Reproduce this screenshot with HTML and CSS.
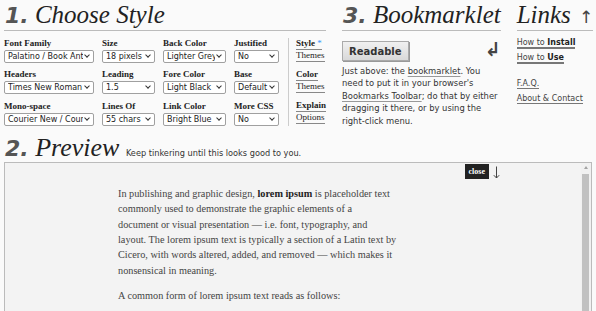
FILE: index.html
```html
<!DOCTYPE html>
<html lang="en">
<head>
  <meta charset="UTF-8">
  <meta name="viewport" content="width=device-width, initial-scale=1.0">
  <title>Readable</title>
  <link rel="stylesheet" href="styles.css">
</head>
<body>
  <div class="top">
    <section class="choose">
      <h1 class="heading"><span class="num">1.</span> Choose Style</h1>
      <div class="choose-body">
        <div class="fields">
          <div class="field">
            <label>Font Family</label>
            <span class="pick"><select><option>Palatino / Book Antiqua</option></select></span>
          </div>
          <div class="field">
            <label>Size</label>
            <span class="pick"><select><option>18 pixels</option></select></span>
          </div>
          <div class="field">
            <label>Back Color</label>
            <span class="pick"><select><option>Lighter Grey</option></select></span>
          </div>
          <div class="field">
            <label>Justified</label>
            <span class="pick"><select><option>No</option></select></span>
          </div>
          <div class="field">
            <label>Headers</label>
            <span class="pick"><select><option>Times New Roman / Times</option></select></span>
          </div>
          <div class="field">
            <label>Leading</label>
            <span class="pick"><select><option>1.5</option></select></span>
          </div>
          <div class="field">
            <label>Fore Color</label>
            <span class="pick"><select><option>Light Black</option></select></span>
          </div>
          <div class="field">
            <label>Base</label>
            <span class="pick"><select><option>Default</option></select></span>
          </div>
          <div class="field">
            <label>Mono-space</label>
            <span class="pick"><select><option>Courier New / Courier</option></select></span>
          </div>
          <div class="field">
            <label>Lines Of</label>
            <span class="pick"><select><option>55 chars</option></select></span>
          </div>
          <div class="field">
            <label>Link Color</label>
            <span class="pick"><select><option>Bright Blue</option></select></span>
          </div>
          <div class="field">
            <label>More CSS</label>
            <span class="pick"><select><option>No</option></select></span>
          </div>
        </div>
        <div class="side">
          <div class="side-group">
            <a href="#" class="strong">Style <span class="star">*</span></a>
            <a href="#">Themes</a>
          </div>
          <div class="side-group">
            <a href="#" class="strong">Color</a>
            <a href="#">Themes</a>
          </div>
          <div class="side-group">
            <a href="#" class="strong">Explain</a>
            <a href="#">Options</a>
          </div>
        </div>
      </div>
    </section>

    <section class="bookmarklet">
      <h1 class="heading"><span class="num">3.</span> Bookmarklet</h1>
      <div class="bm-row">
        <button class="readable">Readable</button>
        <span class="return">&#8626;</span>
      </div>
      <p class="bm-text">Just above: the <a href="#">bookmarklet</a>. You need to put it in your browser's <a href="#">Bookmarks Toolbar</a>; do that by either dragging it there, or by using the right-click menu.</p>
    </section>

    <section class="links">
      <h1 class="heading">Links <span class="up">&uarr;</span></h1>
      <ul class="link-list">
        <li class="main"><a href="#">How to <b>Install</b></a></li>
        <li class="main"><a href="#">How to <b>Use</b></a></li>
        <li class="gap"><a href="#">F.A.Q.</a></li>
        <li><a href="#">About &amp; Contact</a></li>
      </ul>
    </section>
  </div>

  <section class="preview-wrap">
    <h1 class="heading plain"><span class="num">2.</span> Preview <span class="hint">Keep tinkering until this looks good to you.</span></h1>
    <div class="preview">
      <span class="close">close</span>
      <svg class="down" width="7" height="13" viewBox="0 0 7 13">
        <path d="M3.5 0.5V12M0.8 9.2L3.5 12L6.2 9.2" fill="none" stroke="#444" stroke-width="1"/>
      </svg>
      <div class="scrollbar"><span class="scroll-up"></span><span class="thumb"></span></div>
      <article class="sample">
        <p>In publishing and graphic design, <b>lorem ipsum</b> is placeholder text<br>
        commonly used to demonstrate the graphic elements of a<br>
        document or visual presentation &mdash; i.e. font, typography, and<br>
        layout. The lorem ipsum text is typically a section of a Latin text by<br>
        Cicero, with words altered, added, and removed &mdash; which makes it<br>
        nonsensical in meaning.</p>
        <p>A common form of lorem ipsum text reads as follows:</p>
      </article>
    </div>
  </section>
</body>
</html>
```

FILE: styles.css
```css
body {
  margin: 0;
  padding: 0 4px;
  background-color: #fafafa;
  color: #333;
  font-family: "DejaVu Sans", Verdana, sans-serif;
  font-size: 8px;
}

.top {
  display: flex;
  gap: 16px;
}

.choose {
  width: 323px;
}

.bookmarklet {
  width: 160px;
}

.links {
  flex: 1;
}

/* Section headings */
.heading {
  margin: 0;
  height: 30px;
  border-bottom: 1px solid #bbb;
  font-family: "Liberation Serif", "Times New Roman", serif;
  font-style: italic;
  font-weight: normal;
  font-size: 25px;
  line-height: 30px;
  color: #222;
  white-space: nowrap;
}

.num {
  font-family: "DejaVu Sans", Verdana, sans-serif;
  font-weight: bold;
  font-size: 22px;
  color: #555;
  margin-left: 1px;
}

.up {
  font-family: "DejaVu Sans", sans-serif;
  font-style: normal;
  font-size: 17px;
  color: #444;
  margin-left: 2px;
}

/* Choose style */
.choose-body {
  display: flex;
  margin-top: 7px;
}

.fields {
  display: grid;
  grid-template-columns: 90px 53px 63px 45px;
  column-gap: 8px;
  row-gap: 6px;
}

.field label {
  display: block;
  font-family: "Liberation Serif", serif;
  font-weight: bold;
  font-size: 9px;
  line-height: 11px;
  color: #222;
  margin-bottom: 1px;
}

.pick {
  display: block;
  position: relative;
}

.pick select {
  -webkit-appearance: none;
  appearance: none;
  display: block;
  width: 100%;
  height: 13px;
  margin: 0;
  padding: 0 10px 0 3px;
  border: 1px solid #a0a0a0;
  border-radius: 2px;
  background: #fff;
  font-family: "DejaVu Sans", Verdana, sans-serif;
  font-size: 8px;
  line-height: 11px;
  color: #222;
}

.pick::after {
  content: "";
  position: absolute;
  right: 5px;
  top: 3px;
  width: 3px;
  height: 3px;
  border-right: 1.5px solid #333;
  border-bottom: 1.5px solid #333;
  transform: rotate(45deg);
}

.side {
  margin-left: 9px;
  padding-left: 7px;
  border-left: 1px solid #ccc;
  height: 88px;
}

.side-group {
  margin-bottom: 7px;
}

.side-group a {
  display: table;
  font-family: "Liberation Serif", serif;
  font-size: 9px;
  line-height: 11px;
  color: #222;
  text-decoration: none;
  border-bottom: 1px solid #888;
}

.side-group a.strong {
  font-weight: bold;
}

.star {
  color: #39f;
  font-weight: normal;
}

/* Bookmarklet */
.bm-row {
  display: flex;
  justify-content: space-between;
  align-items: flex-start;
  margin-top: 10px;
}

.readable {
  height: 20px;
  padding: 0 6px;
  border: 1px solid #aaa;
  border-radius: 0;
  background: linear-gradient(#f0f0f0, #d9d9d9);
  box-shadow: 1px 1px 0 #999;
  font-family: "DejaVu Sans", Verdana, sans-serif;
  font-weight: bold;
  font-size: 10px;
  color: #333;
}

.return {
  font-family: "DejaVu Sans", sans-serif;
  font-weight: bold;
  font-size: 19px;
  line-height: 16px;
  color: #444;
}

.bm-text {
  margin: 4px 0 0;
  font-size: 8.4px;
  line-height: 12.4px;
  color: #333;
}

.bm-text a {
  color: #333;
  text-decoration: underline;
  text-decoration-color: #999;
  text-underline-offset: 2px;
}

/* Links */
.link-list {
  list-style: none;
  margin: 6px 0 0;
  padding: 0;
}

.link-list li {
  line-height: 12px;
  margin-bottom: 3px;
}

.link-list a {
  color: #444;
  text-decoration: none;
  border-bottom: 1px solid #777;
}

.link-list li.main a {
  border-bottom-width: 2px;
}

.link-list b {
  color: #222;
}

.link-list li.gap {
  margin-top: 14px;
}

/* Preview */
.preview-wrap {
  margin-top: 6px;
}

.heading.plain {
  border-bottom: none;
  height: 29px;
  font-size: 26px;
}

.hint {
  font-family: "DejaVu Sans", Verdana, sans-serif;
  font-style: normal;
  font-size: 8.2px;
  color: #333;
}

.preview {
  position: relative;
  height: 170px;
  overflow: hidden;
  background: #f3f3f3;
  border: 1px solid #bbb;
}

.close {
  position: absolute;
  top: 1px;
  right: 102px;
  padding: 3px 4px;
  background: #222;
  color: #fff;
  font-family: "Liberation Serif", serif;
  font-weight: bold;
  font-size: 8px;
  line-height: 9px;
}

.down {
  position: absolute;
  top: 3px;
  right: 91px;
}

.scrollbar {
  position: absolute;
  top: 0;
  right: 0;
  bottom: 0;
  width: 10px;
  background: #f1f1f1;
}

.scroll-up {
  position: absolute;
  top: 3px;
  left: 3px;
  border-left: 2px solid transparent;
  border-right: 2px solid transparent;
  border-bottom: 3px solid #a3a3a3;
}

.thumb {
  position: absolute;
  top: 11px;
  left: 1px;
  width: 7px;
  bottom: 0;
  background: #c1c1c1;
}

.sample {
  width: 300px;
  margin-left: 113px;
  padding-top: 23px;
  font-family: "Liberation Serif", "Times New Roman", serif;
  font-size: 10.25px;
  line-height: 15.33px;
  color: #444;
}

.sample p {
  margin: 0 0 10px;
}

.sample b {
  color: #222;
}
```
